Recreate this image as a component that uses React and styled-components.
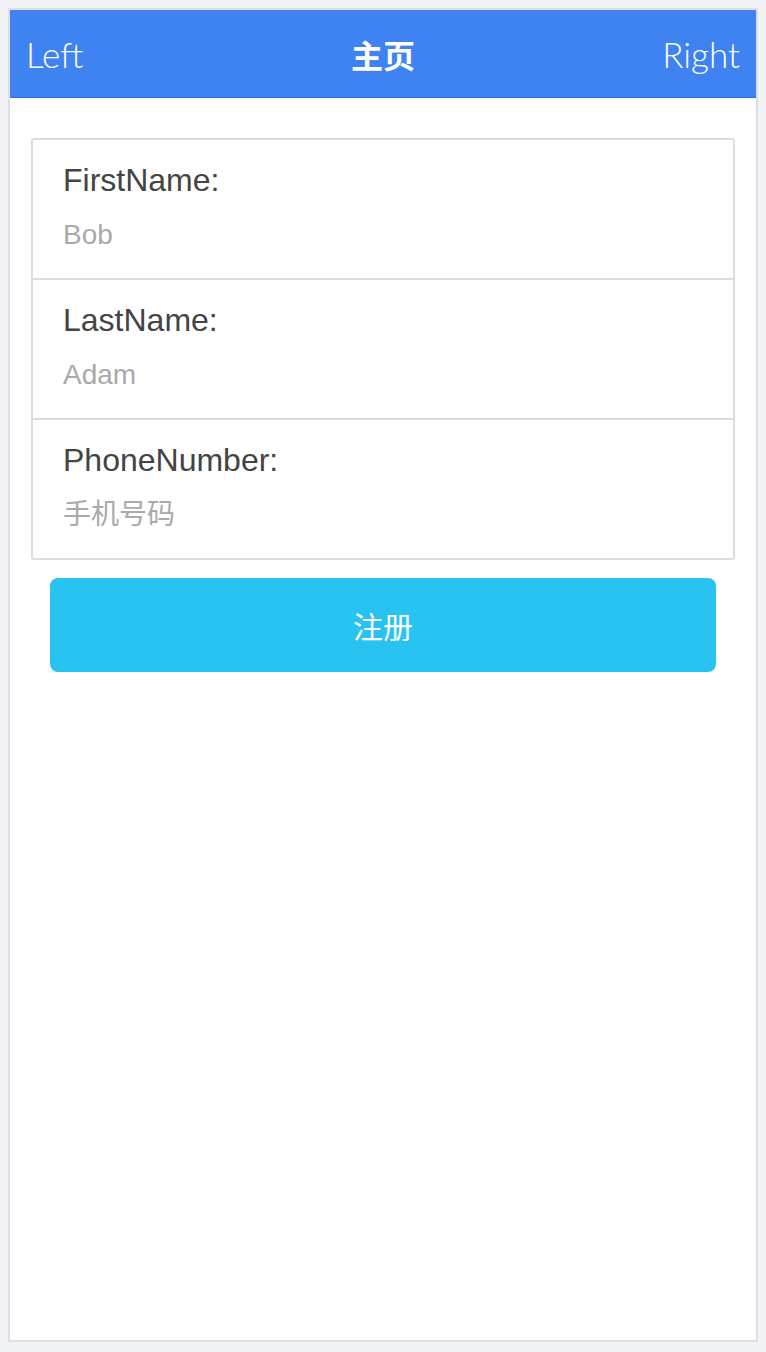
import React from "react";
import styled, { createGlobalStyle } from "styled-components";

const GlobalStyle = createGlobalStyle`
  html, body {
    background: #f2f3f7;
  }
  body {
    margin: 8px;
    font-family: "Liberation Sans", "Noto Sans CJK SC", sans-serif;
  }
  * {
    box-sizing: border-box;
  }
`;

const fields = [
  { key: "first", label: "FirstName:", placeholder: "Bob" },
  { key: "last", label: "LastName:", placeholder: "Adam" },
  { key: "phone", label: "PhoneNumber:", placeholder: "手机号码" },
];

const App = () => {
  return (
    <>
      <GlobalStyle />
      <Screen>
        <NavBar>
          <NavSide>Left</NavSide>
          <NavTitle>主页</NavTitle>
          <NavSide align="right">Right</NavSide>
        </NavBar>
        <Content>
          <FormCard>
            {fields.map((item) => (
              <FieldRow key={item.key}>
                <FieldLabel>{item.label}</FieldLabel>
                <FieldInput placeholder={item.placeholder} />
              </FieldRow>
            ))}
          </FormCard>
          <SubmitButton type="button">注册</SubmitButton>
        </Content>
      </Screen>
    </>
  );
};

export default App;

const Screen = styled.div`
  width: 750px;
  height: 1334px;
  border: 2px solid #dedfe5;
  background: #fff;
  display: flex;
  flex-direction: column;
`;

const NavBar = styled.div`
  height: 88px;
  flex-shrink: 0;
  display: grid;
  grid-template-columns: 1fr auto 1fr;
  align-items: center;
  padding: 0 16px;
  background: #3f83f2;
  border-bottom: 1px solid #2c70e4;
  color: #fff;
`;

const NavSide = styled.div`
  font-family: "Lato", "Liberation Sans", sans-serif;
  font-weight: 300;
  font-size: 35px;
  text-align: ${(props) => props.align || "left"};
`;

const NavTitle = styled.div`
  font-family: "Liberation Sans", "Noto Sans CJK SC", sans-serif;
  font-weight: 700;
  font-size: 32px;
`;

const Content = styled.div`
  padding: 40px 21px 0;
  display: flex;
  flex-direction: column;
`;

const FormCard = styled.div`
  border: 2px solid #dddddd;
  border-radius: 3px;
`;

const FieldRow = styled.div`
  box-sizing: content-box;
  height: 118px;
  padding: 20px 30px 0;
  display: flex;
  flex-direction: column;
  & + & {
    border-top: 2px solid #dddddd;
  }
`;

const FieldLabel = styled.label`
  font-size: 32px;
  line-height: 40px;
  color: #444;
`;

const FieldInput = styled.input`
  margin-top: 17px;
  padding: 0;
  border: none;
  outline: none;
  background: transparent;
  font-family: "Liberation Sans", "Noto Sans CJK SC", sans-serif;
  font-size: 28px;
  line-height: 36px;
  height: 36px;
  color: #444;
  &::placeholder {
    color: #aaaaaa;
  }
`;

const SubmitButton = styled.button`
  margin: 18px 19px 0;
  height: 94px;
  border: none;
  border-radius: 8px;
  background: #29c3f2;
  color: #fff;
  font-family: "Liberation Sans", "Noto Sans CJK SC", sans-serif;
  font-size: 30px;
`;
